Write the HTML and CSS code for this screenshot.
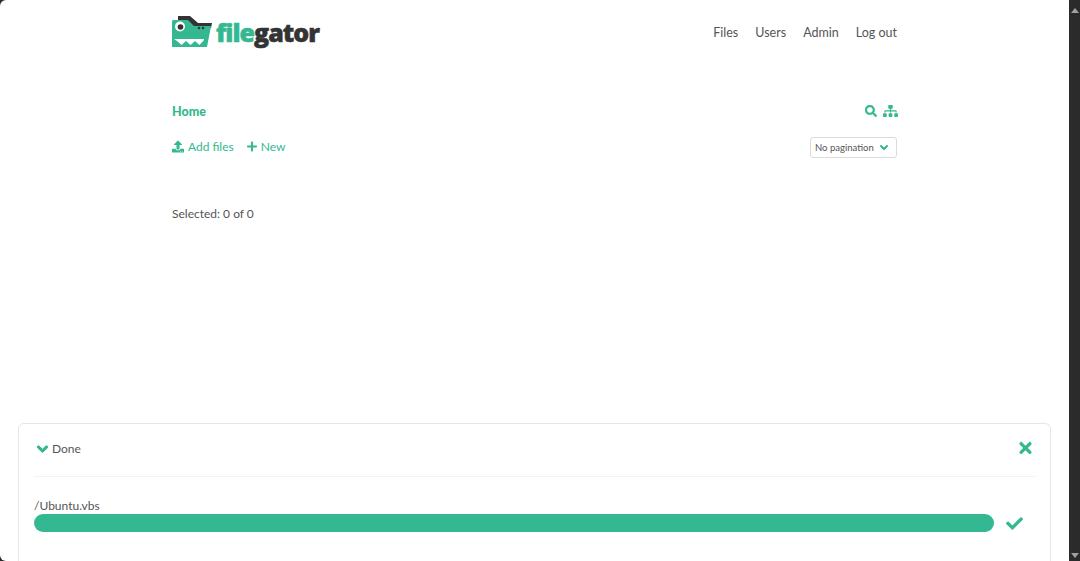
FILE: index.html
```html
<!DOCTYPE html>
<html lang="en">
<head>
    <meta charset="UTF-8">
    <meta name="viewport" content="width=device-width, initial-scale=1.0">
    <title>FileGator</title>
    <link rel="stylesheet" href="styles.css">
</head>
<body>
    <div class="page">
        <div class="container">
            <nav class="navbar">
                <a class="logo" href="#">
                    <svg class="logo-mark" viewBox="0 0 40 32">
                        <path fill="#333" d="M6 0h12l8 7h14l-1 5H22l-6-7H6z"/>
                        <path fill="#34b891" d="M1 4h15l6 6h17l-4 21H0V5z"/>
                        <circle cx="8" cy="10.500" r="5" fill="#fff"/>
                        <circle cx="8.500" cy="11" r="2.800" fill="#333"/>
                        <circle cx="27" cy="12" r="1.300" fill="#333"/>
                        <circle cx="31" cy="12" r="1.300" fill="#333"/>
                        <path fill="#fff" d="M2 23h30v1l-4.500 5-4.500-4-4.500 4-4.500-4-4.500 4-4.500-4z"/>
                    </svg>
                    <span class="logo-text"><span class="logo-file">file</span>gator</span>
                </a>
                <div class="nav-links">
                    <a href="#">Files</a>
                    <a href="#">Users</a>
                    <a href="#">Admin</a>
                    <a href="#">Log out</a>
                </div>
            </nav>

            <div class="crumbs">
                <a class="crumb-home" href="#">Home</a>
                <div class="crumb-tools">
                    <svg class="icon-search" viewBox="0 0 512 512"><path d="M505 442.700L405.300 343c-4.500-4.500-10.600-7-17-7H372c27.600-35.300 44-79.700 44-128C416 93.100 322.900 0 208 0S0 93.100 0 208s93.100 208 208 208c48.300 0 92.700-16.400 128-44v16.300c0 6.400 2.500 12.500 7 17l99.700 99.700c9.400 9.400 24.600 9.400 33.900 0l28.300-28.300c9.400-9.400 9.400-24.600.1-34zM208 336c-70.700 0-128-57.200-128-128 0-70.700 57.200-128 128-128 70.700 0 128 57.200 128 128 0 70.700-57.200 128-128 128z"/></svg>
                    <svg class="icon-sitemap" viewBox="0 0 640 512"><path d="M128 352H32c-17.670 0-32 14.330-32 32v96c0 17.670 14.330 32 32 32h96c17.670 0 32-14.330 32-32v-96c0-17.670-14.330-32-32-32zm-24-80h192v48h48v-48h192v48h48v-57.590c0-21.170-17.230-38.410-38.410-38.410H344v-64h40c17.670 0 32-14.330 32-32V32c0-17.670-14.330-32-32-32H256c-17.670 0-32 14.330-32 32v96c0 17.670 14.330 32 32 32h40v64H94.410C73.230 224 56 241.230 56 262.410V320h48v-48zm264 80h-96c-17.670 0-32 14.330-32 32v96c0 17.670 14.330 32 32 32h96c17.670 0 32-14.330 32-32v-96c0-17.670-14.330-32-32-32zm240 0h-96c-17.670 0-32 14.330-32 32v96c0 17.670 14.330 32 32 32h96c17.670 0 32-14.330 32-32v-96c0-17.670-14.330-32-32-32z"/></svg>
                </div>
            </div>

            <div class="toolbar">
                <div class="actions">
                    <a href="#">
                        <svg class="icon-upload" viewBox="0 0 512 512"><path d="M296 384h-80c-13.300 0-24-10.700-24-24V192h-87.700c-17.800 0-26.700-21.500-14.100-34.100L242.300 5.700c7.500-7.500 19.800-7.500 27.300 0l152.200 152.200c12.600 12.600 3.700 34.100-14.100 34.100H320v168c0 13.300-10.700 24-24 24zm216-8v112c0 13.300-10.700 24-24 24H24c-13.300 0-24-10.700-24-24V376c0-13.300 10.700-24 24-24h136v8c0 30.900 25.100 56 56 56h80c30.900 0 56-25.100 56-56v-8h136c13.300 0 24 10.700 24 24zm-124 88c0-11-9-20-20-20s-20 9-20 20 9 20 20 20 20-9 20-20zm64 0c0-11-9-20-20-20s-20 9-20 20 9 20 20 20 20-9 20-20z"/></svg>
                        Add files
                    </a>
                    <a href="#">
                        <svg class="icon-plus" viewBox="0 0 448 512"><path d="M416 208H272V64c0-17.670-14.330-32-32-32h-32c-17.670 0-32 14.330-32 32v144H32c-17.670 0-32 14.330-32 32v32c0 17.670 14.330 32 32 32h144v144c0 17.670 14.330 32 32 32h32c17.670 0 32-14.330 32-32V304h144c17.670 0 32-14.330 32-32v-32c0-17.670-14.330-32-32-32z"/></svg>
                        New
                    </a>
                </div>
                <div class="pagination-select">
                    No pagination
                    <svg class="icon-chevron-sm" viewBox="0 0 448 512"><path d="M207.029 381.476L12.686 187.132c-9.373-9.373-9.373-24.569 0-33.941l22.667-22.667c9.357-9.357 24.522-9.375 33.901-.04L224 284.505l154.745-154.021c9.379-9.335 24.544-9.317 33.901.04l22.667 22.667c9.373 9.373 9.373 24.569 0 33.941L240.971 381.476c-9.373 9.372-24.569 9.372-33.942 0z"/></svg>
                </div>
            </div>

            <p class="selected">Selected: 0 of 0</p>
        </div>

        <!-- upload progress sits over the page, cut off by the window -->
        <section class="upload-panel">
            <div class="upload-head">
                <div class="upload-status">
                    <svg class="icon-chevron" viewBox="0 0 448 512"><path d="M207.029 381.476L12.686 187.132c-9.373-9.373-9.373-24.569 0-33.941l22.667-22.667c9.357-9.357 24.522-9.375 33.901-.04L224 284.505l154.745-154.021c9.379-9.335 24.544-9.317 33.901.04l22.667 22.667c9.373 9.373 9.373 24.569 0 33.941L240.971 381.476c-9.373 9.372-24.569 9.372-33.942 0z"/></svg>
                    Done
                </div>
                <svg class="icon-close" viewBox="0 0 352 512"><path d="M242.720 256l100.070-100.070c12.280-12.280 12.280-32.190 0-44.480l-22.240-22.240c-12.280-12.280-32.190-12.280-44.480 0L176 189.280 75.930 89.210c-12.280-12.280-32.190-12.280-44.480 0L9.210 111.450c-12.280 12.280-12.280 32.190 0 44.480L109.280 256 9.210 356.070c-12.280 12.280-12.280 32.190 0 44.480l22.240 22.240c12.280 12.280 32.200 12.280 44.480 0L176 322.720l100.070 100.070c12.280 12.280 32.200 12.280 44.480 0l22.240-22.240c12.280-12.280 12.280-32.190 0-44.480L242.720 256z"/></svg>
            </div>
            <div class="upload-file">
                <div class="upload-name">/Ubuntu.vbs</div>
                <div class="upload-row">
                    <div class="progress"></div>
                    <svg class="icon-check" viewBox="0 0 512 512"><path d="M173.898 439.404l-166.400-166.400c-9.997-9.997-9.997-26.206 0-36.204l36.203-36.204c9.997-9.998 26.207-9.998 36.204 0L192 312.690 432.095 72.596c9.997-9.997 26.207-9.997 36.204 0l36.203 36.204c9.997 9.997 9.997 26.206 0 36.204l-294.400 294.401c-9.998 9.997-26.207 9.997-36.204-.001z"/></svg>
                </div>
            </div>
        </section>
    </div>

    <div class="scrollbar">
        <span class="arrow-up"></span>
        <span class="arrow-down"></span>
    </div>
</body>
</html>
```

FILE: styles.css
```css
html, body {
    height: 100%;
}

body {
    margin: 0;
    display: flex;
    overflow: hidden;
    background-color: #2b2b2b;
    color: #555;
    font-family: 'Lato', sans-serif;
    font-size: 12px;
}

a {
    color: inherit;
    text-decoration: none;
}

svg {
    fill: #34b891;
    display: block;
    flex: none;
}

.page {
    flex: 1;
    position: relative;
    overflow: hidden;
    background: white;
    border-radius: 6px 0 0 6px;
}

.container {
    width: 725px;
    margin-left: 172px;
}

.navbar {
    height: 64px;
    display: flex;
    justify-content: space-between;
    align-items: center;
}

.logo {
    display: flex;
    align-items: center;
    gap: 4px;
}

.logo-mark {
    width: 40px;
    height: 32px;
}

.logo-text {
    font-family: 'Open Sans', sans-serif;
    font-size: 25px;
    font-weight: 800;
    letter-spacing: -1px;
    -webkit-text-stroke: 0.5px currentColor;
    color: #333;
}

.logo-file {
    color: #34b891;
}

.nav-links {
    display: flex;
    gap: 17px;
    font-size: 12.500px;
}

.crumbs {
    margin-top: 38px;
    height: 18px;
    display: flex;
    justify-content: space-between;
    align-items: center;
}

.crumb-home {
    color: #34b891;
    font-size: 12.500px;
    font-weight: 900;
}

.crumb-tools {
    display: flex;
    align-items: center;
    gap: 6px;
    margin-right: -1px;
}

.icon-search {
    width: 12px;
    height: 12px;
    stroke: #34b891;
    stroke-width: 15;
}

.icon-sitemap {
    width: 15px;
    height: 12px;
}

.toolbar {
    margin-top: 17px;
    display: flex;
    justify-content: space-between;
    align-items: flex-start;
}

.actions {
    display: flex;
    gap: 13px;
    padding-top: 2px;
    color: #34b891;
}

.actions a {
    display: flex;
    align-items: center;
    gap: 4px;
}

.icon-upload {
    width: 12px;
    height: 13px;
}

.icon-plus {
    width: 10px;
    height: 13px;
}

.pagination-select {
    width: 87px;
    height: 21px;
    box-sizing: border-box;
    padding: 0 8px 0 4px;
    display: flex;
    justify-content: space-between;
    align-items: center;
    border: 1px solid #dbdbdb;
    border-radius: 3px;
    font-size: 9.500px;
}

.icon-chevron-sm {
    width: 8px;
    height: 9px;
    stroke: #34b891;
    stroke-width: 50;
}

.selected {
    margin: 48px 0 0;
}

.upload-panel {
    position: absolute;
    left: 18px;
    right: 18px;
    top: 423px;
    height: 160px;
    box-sizing: border-box;
    padding: 0 15px;
    background: white;
    border: 1px solid #e6e6e6;
    border-radius: 6px;
}

.upload-head {
    height: 52px;
    display: flex;
    justify-content: space-between;
    align-items: flex-start;
    border-bottom: 1px solid #f2f2f2;
}

.upload-status {
    display: flex;
    align-items: center;
    gap: 4px;
    padding: 17px 0 0 3px;
}

.icon-chevron {
    width: 11px;
    height: 12px;
    stroke: #34b891;
    stroke-width: 50;
}

.icon-close {
    width: 13px;
    height: 18px;
    margin: 15px 3px 0 0;
}

.upload-file {
    margin-top: 21px;
}

.upload-name {
    line-height: 15px;
    margin-bottom: 1px;
}

.upload-row {
    display: flex;
    align-items: center;
}

.progress {
    width: 960px;
    height: 18px;
    border-radius: 9px;
    background-color: #34b891;
}

.icon-check {
    width: 17px;
    height: 17px;
    margin-left: 12px;
}

.scrollbar {
    width: 11px;
    display: flex;
    flex-direction: column;
    justify-content: space-between;
    align-items: center;
    padding: 8px 0 3px;
}

.arrow-up {
    border: 4px solid transparent;
    border-top: 0;
    border-bottom: 5px solid #a0a0a0;
}

.arrow-down {
    border: 4px solid transparent;
    border-bottom: 0;
    border-top: 5px solid #a0a0a0;
}
```
